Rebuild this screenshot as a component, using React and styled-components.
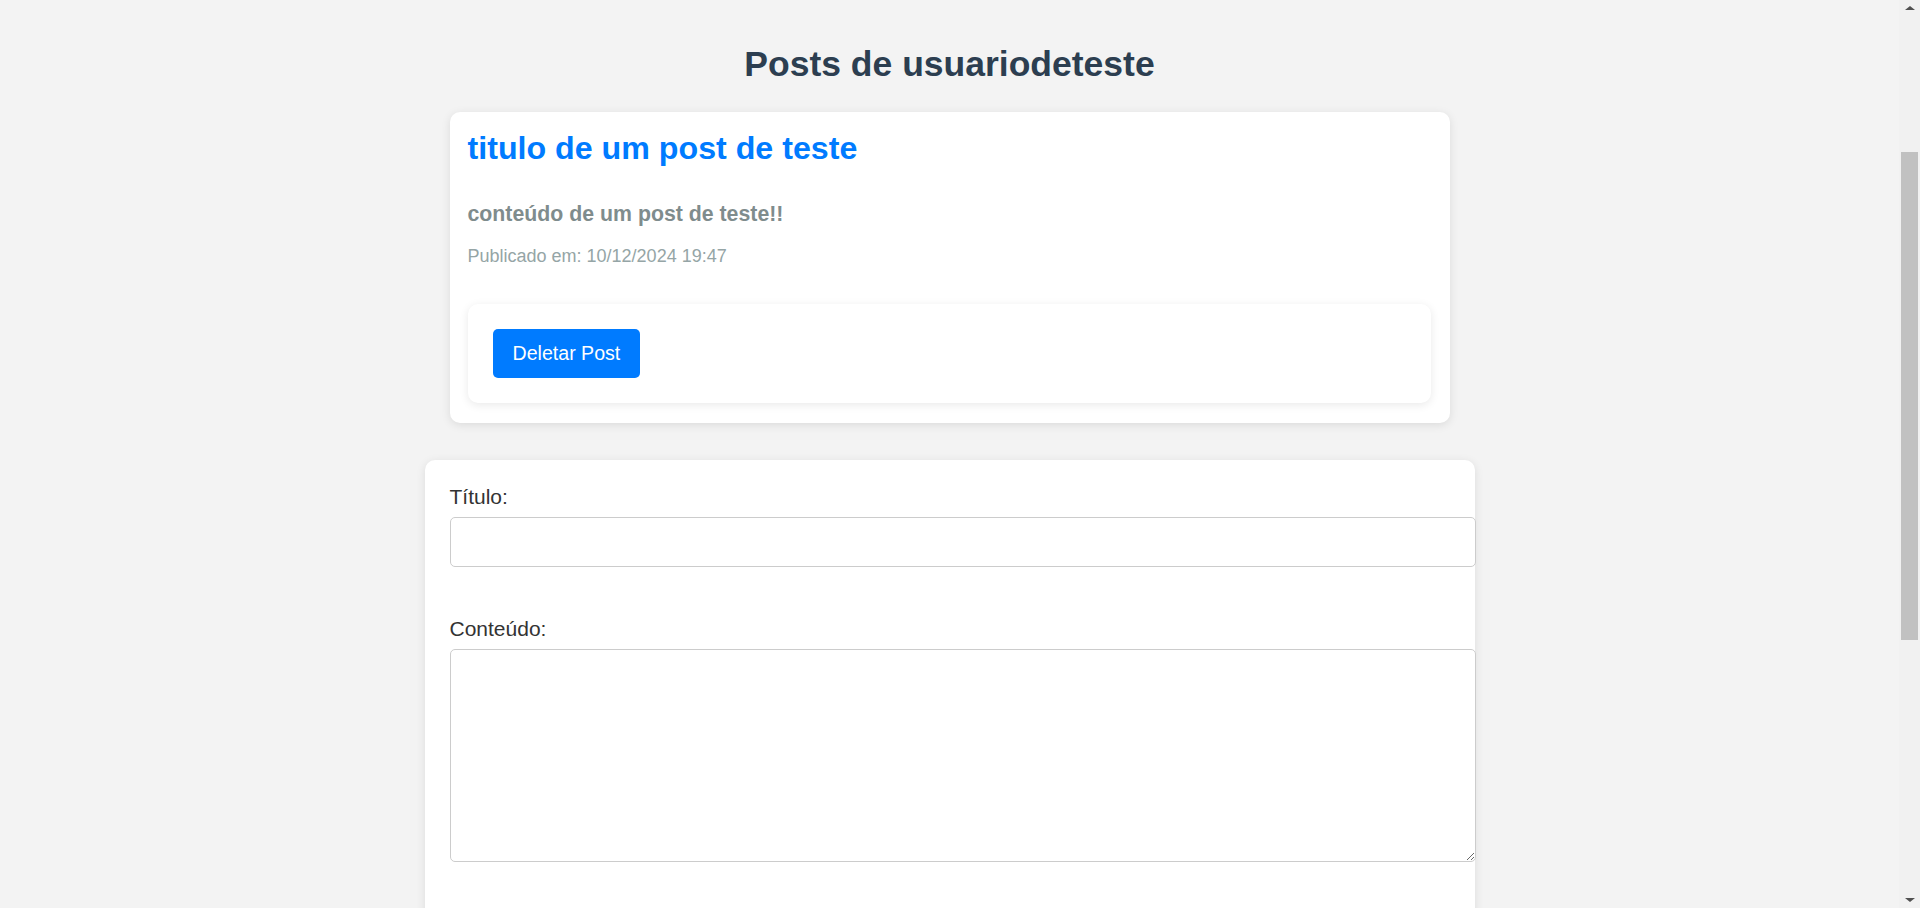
import React from "react";
import styled, { createGlobalStyle } from "styled-components";

const GlobalStyle = createGlobalStyle`
  html, body {
    overflow: hidden;
  }
  body {
    margin: 0;
    background: #f3f3f3;
    font-family: "Liberation Sans", Arial, Helvetica, sans-serif;
  }
`;

// réplica da barra de rolagem da janela (fica por cima da página)
const BarraRolagem = styled.div`
  position: fixed;
  top: 0;
  right: 0;
  width: 21px;
  height: 100vh;
  background: #f1f1f1;
`;

const Seta = styled.div`
  position: absolute;
  left: 6px;
  width: 0;
  height: 0;
  border-left: 5px solid transparent;
  border-right: 5px solid transparent;
  ${({ $baixo }) =>
    $baixo
      ? "bottom: 6px; border-top: 4px solid #505050;"
      : "top: 6px; border-bottom: 4px solid #505050;"}
`;

const Polegar = styled.div`
  position: absolute;
  top: 152px;
  left: 2px;
  width: 17px;
  height: 488px;
  background: #c1c1c1;
`;

const Pagina = styled.div`
  display: flex;
  flex-direction: column;
  align-items: center;
  padding: 44px 21px 200px 0;
`;

const TituloPagina = styled.h1`
  margin: 0 0 27px;
  font-size: 35.5px;
  font-weight: bold;
  line-height: normal;
  color: #2c3e50;
`;

const PostCard = styled.div`
  box-sizing: border-box;
  width: 1000px;
  padding: 18px 19px 20px 18px;
  background: white;
  border-radius: 10px;
  box-shadow: 0 2px 10px rgba(0, 0, 0, 0.1);
`;

const TituloPost = styled.h2`
  margin: 0;
  font-size: 32.2px;
  font-weight: bold;
  line-height: normal;
  color: #007bff;
`;

const ConteudoPost = styled.p`
  margin: 35px 0 0;
  font-size: 21.3px;
  font-weight: bold;
  line-height: normal;
  color: #7f8c8d;
`;

const DataPost = styled.p`
  margin: 19px 0 0;
  font-size: 18px;
  line-height: normal;
  color: #95a5a6;
`;

const Acoes = styled.div`
  margin-top: 37px;
  padding: 25px;
  background: white;
  border-radius: 10px;
  box-shadow: 0 2px 10px rgba(0, 0, 0, 0.09);
`;

const Botao = styled.button`
  height: 49px;
  padding: 0 20px;
  border: none;
  border-radius: 5px;
  background: #007bff;
  color: white;
  font-family: inherit;
  font-size: 19.6px;
  cursor: pointer;
`;

const Formulario = styled.form`
  box-sizing: border-box;
  width: 1050px;
  margin-top: 37px;
  padding: 25px 25px 120px;
  background: white;
  border-radius: 10px;
  box-shadow: 0 2px 10px rgba(0, 0, 0, 0.1);
`;

const Rotulo = styled.label`
  display: block;
  margin-bottom: 8px;
  font-size: 21px;
  line-height: normal;
  color: #333;
`;

const Campo = styled.input`
  display: block;
  width: 100%;
  height: 24px;
  margin: 0 0 50px;
  padding: 12px;
  border: 1px solid #ccc;
  border-radius: 5px;
  font-family: inherit;
  font-size: 21px;
  outline: none;
`;

const AreaTexto = styled.textarea`
  display: block;
  width: 100%;
  height: 187px;
  margin: 1px 0 0;
  padding: 12px;
  border: 1px solid #ccc;
  border-radius: 5px;
  font-family: inherit;
  font-size: 21px;
  outline: none;
`;

export default function App() {
  return (
    <>
      <GlobalStyle />
      <Pagina>
        <TituloPagina>Posts de usuariodeteste</TituloPagina>
        <PostCard>
          <TituloPost>titulo de um post de teste</TituloPost>
          <ConteudoPost>conteúdo de um post de teste!!</ConteudoPost>
          <DataPost>Publicado em: 10/12/2024 19:47</DataPost>
          <Acoes>
            <Botao type="button">Deletar Post</Botao>
          </Acoes>
        </PostCard>
        <Formulario onSubmit={(e) => e.preventDefault()}>
          <Rotulo htmlFor="titulo">Título:</Rotulo>
          <Campo id="titulo" type="text" />
          <Rotulo htmlFor="conteudo">Conteúdo:</Rotulo>
          <AreaTexto id="conteudo" />
        </Formulario>
      </Pagina>
      <BarraRolagem>
        <Seta />
        <Polegar />
        <Seta $baixo />
      </BarraRolagem>
    </>
  );
}
